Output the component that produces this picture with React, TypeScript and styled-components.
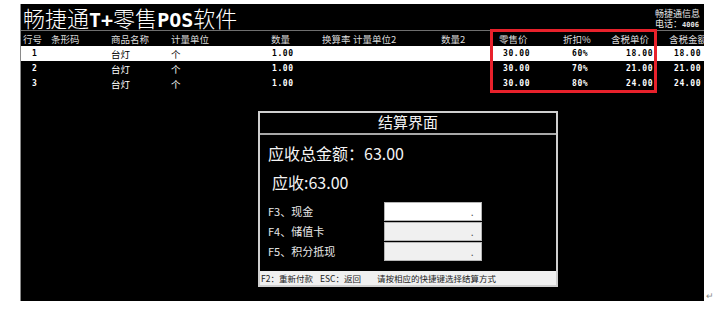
import styled, { createGlobalStyle } from "styled-components";

const GlobalStyle = createGlobalStyle`
  html, body {
    margin: 0;
    padding: 0;
    background: #ffffff;
  }
  body {
    font-family: "Noto Sans CJK SC", "Noto Sans", sans-serif;
  }
`;

const CJK = `"Noto Sans CJK SC", "Noto Sans", sans-serif`;
const MONO = `"DejaVu Sans Mono", "Liberation Mono", monospace`;

const Page = styled.div`
  width: 722px;
  height: 313px;
  padding: 4px 0 0 20px;
  box-sizing: border-box;
  display: flex;
  align-items: flex-end;
  overflow: hidden;
`;

const Screen = styled.div`
  width: 684px;
  height: 297px;
  box-sizing: border-box;
  align-self: flex-start;
  background: #000;
  border-left: 1px solid #8a8a8a;
  display: flex;
  flex-direction: column;
  overflow: hidden;
  flex-shrink: 0;
`;

const ReturnMark = styled.span`
  font-family: ${CJK};
  font-size: 9px;
  line-height: 9px;
  color: #8c8c8c;
  margin: 0 0 13px 2px;
`;

const TitleBar = styled.div`
  height: 26px;
  display: flex;
  align-items: flex-start;
  padding-left: 2px;
`;

const Title = styled.div`
  font-family: ${CJK};
  font-weight: 300;
  font-size: 22px;
  line-height: 26px;
  color: #fff;
  white-space: nowrap;
`;

const TitleLatin = styled.span`
  font-family: ${MONO};
  font-weight: bold;
  font-size: 20px;
`;

const Info = styled.div`
  margin-left: auto;
  width: 49px;
  flex-shrink: 0;
  padding-top: 5px;
  display: flex;
  flex-direction: column;
  white-space: nowrap;
  font-family: ${CJK};
  font-size: 9px;
  color: #e6e6e6;
`;

const InfoLine = styled.div`
  height: 10px;
  line-height: 10px;
`;

const InfoNum = styled.span`
  font-family: ${MONO};
  font-weight: bold;
  font-size: 7px;
`;

const Table = styled.div`
  position: relative;
  border-top: 1px solid #6e6e6e;
`;

const cols = "28px 60px 60px 100px 50px 30px 90px 52px 62px 48px 54px 60px";

const Row = styled.div<{ $selected?: boolean }>`
  display: grid;
  grid-template-columns: ${cols};
  height: 15px;
  align-items: center;
  background: ${({ $selected }) => ($selected ? "#fff" : "#000")};
  color: ${({ $selected }) => ($selected ? "#000" : "#fff")};
`;

const HeadCell = styled.div<{ $pad: number }>`
  padding-left: ${({ $pad }) => $pad}px;
  font-family: ${CJK};
  font-size: 9.5px;
  line-height: 14px;
  color: #dcdcdc;
  white-space: nowrap;
`;

const Cell = styled.div<{ $pad: number; $num?: boolean }>`
  padding-left: ${({ $pad }) => $pad}px;
  font-family: ${({ $num }) => ($num ? MONO : CJK)};
  font-weight: ${({ $num }) => ($num ? "bold" : "normal")};
  font-size: ${({ $num }) => ($num ? "8px" : "9.5px")};
  letter-spacing: ${({ $num }) => ($num ? "0.6px" : "0")};
  line-height: 14px;
  white-space: nowrap;
`;

const Highlight = styled.div`
  position: absolute;
  left: 469px;
  top: -2px;
  width: 167px;
  height: 64px;
  box-sizing: border-box;
  border: 3px solid #e8212b;
  pointer-events: none;
`;

const Dialog = styled.div`
  margin: 20px 0 0 237px;
  width: 300px;
  height: 176px;
  box-sizing: border-box;
  border: 2px solid #cfcfcf;
  display: flex;
  flex-direction: column;
  background: #000;
`;

const DialogTitle = styled.div`
  height: 20px;
  border-bottom: 2px solid #a8a8a8;
  text-align: center;
  font-family: ${CJK};
  font-size: 15px;
  line-height: 18px;
  color: #f2f2f2;
`;

const DialogBody = styled.div`
  flex: 1;
  padding: 8px 0 0 8px;
  display: flex;
  flex-direction: column;
`;

const Amount = styled.div<{ $indent: number }>`
  padding-left: ${({ $indent }) => $indent}px;
  font-family: ${CJK};
  font-size: 16px;
  line-height: 20px;
  color: #f4f4f4;
  height: 29px;
  white-space: nowrap;
`;

const Payments = styled.div`
  margin-top: 1px;
  display: flex;
  flex-direction: column;
  gap: 1px;
`;

const PayRow = styled.div`
  display: grid;
  grid-template-columns: 116px 98px;
  align-items: center;
  height: 19px;
`;

const PayLabel = styled.div`
  font-family: ${CJK};
  font-size: 11px;
  line-height: 17px;
  color: #e8e8e8;
  white-space: nowrap;
`;

const PayInput = styled.div<{ $enabled?: boolean }>`
  height: 19px;
  box-sizing: border-box;
  background: ${({ $enabled }) => ($enabled ? "#fff" : "#f0f0f0")};
  border: 1px solid #b5b5b5;
  display: flex;
  justify-content: flex-end;
  align-items: flex-end;
  padding: 0 6px 2px 0;
  font-family: ${MONO};
  font-size: 9px;
  line-height: 9px;
  color: #555;
`;

const StatusBar = styled.div`
  height: 14px;
  background: #f0f0f0;
  display: flex;
  align-items: center;
  font-family: ${CJK};
  font-size: 8.5px;
  color: #222;
  white-space: nowrap;
`;

const StatusItem = styled.div<{ $w?: number }>`
  width: ${({ $w }) => ($w ? `${$w}px` : "auto")};
  padding-left: 1px;
`;

const headers: [string, number][] = [
  ["行号", 2],
  ["条形码", 2],
  ["商品名称", 2],
  ["计量单位", 2],
  ["数量", 2],
  ["换算率", 3],
  ["计量单位2", 4],
  ["数量2", 2],
  ["零售价", 8],
  ["折扣%", 10],
  ["含税单价", 10],
  ["含税金额", 14],
];

const pads = [11, 2, 2, 2, 3, 3, 4, 2, 12, 19, 25, 19];

const rows = [
  { no: "1", disc: "60%", unit: "18.00" },
  { no: "2", disc: "70%", unit: "21.00" },
  { no: "3", disc: "80%", unit: "24.00" },
];

export default function App() {
  return (
    <>
      <GlobalStyle />
      <Page>
        <Screen>
          <TitleBar>
            <Title>
              畅捷通<TitleLatin>T+</TitleLatin>零售<TitleLatin>POS</TitleLatin>软件
            </Title>
            <Info>
              <InfoLine>畅捷通信息</InfoLine>
              <InfoLine>
                电话：<InfoNum>4006</InfoNum>
              </InfoLine>
            </Info>
          </TitleBar>
          <Table>
            <Row>
              {headers.map(([h, p]) => (
                <HeadCell key={h} $pad={p}>
                  {h}
                </HeadCell>
              ))}
            </Row>
            {rows.map((r, i) => {
              const vals: [string, boolean][] = [
                [r.no, true],
                ["", false],
                ["台灯", false],
                ["个", false],
                ["1.00", true],
                ["", false],
                ["", false],
                ["", false],
                ["30.00", true],
                [r.disc, true],
                [r.unit, true],
                [r.unit, true],
              ];
              return (
                <Row key={r.no} $selected={i === 0}>
                  {vals.map(([v, num], j) => (
                    <Cell key={j} $pad={pads[j]} $num={num}>
                      {v}
                    </Cell>
                  ))}
                </Row>
              );
            })}
            <Highlight />
          </Table>
          <Dialog>
            <DialogTitle>结算界面</DialogTitle>
            <DialogBody>
              <Amount $indent={0}>应收总金额：63.00</Amount>
              <Amount $indent={4}>应收:63.00</Amount>
              <Payments>
                <PayRow>
                  <PayLabel>F3、现金</PayLabel>
                  <PayInput $enabled>.</PayInput>
                </PayRow>
                <PayRow>
                  <PayLabel>F4、储值卡</PayLabel>
                  <PayInput>.</PayInput>
                </PayRow>
                <PayRow>
                  <PayLabel>F5、积分抵现</PayLabel>
                  <PayInput>.</PayInput>
                </PayRow>
              </Payments>
            </DialogBody>
            <StatusBar>
              <StatusItem $w={58}>F2：重新付款</StatusItem>
              <StatusItem $w={56}>ESC：返回</StatusItem>
              <StatusItem>请按相应的快捷键选择结算方式</StatusItem>
            </StatusBar>
          </Dialog>
        </Screen>
        <ReturnMark>↵</ReturnMark>
      </Page>
    </>
  );
}
